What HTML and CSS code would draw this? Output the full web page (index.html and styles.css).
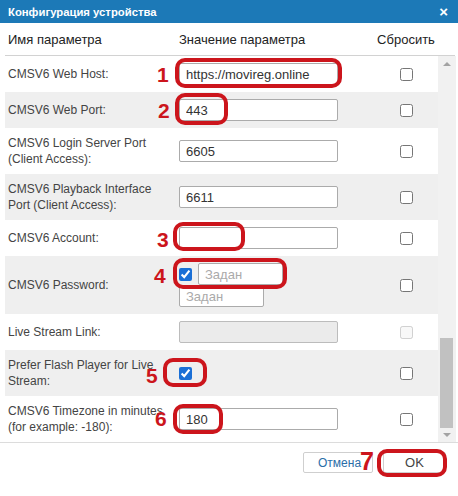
FILE: index.html
```html
<!DOCTYPE html>
<html lang="ru">
<head>
<meta charset="utf-8">
<title>Конфигурация устройства</title>
<link rel="stylesheet" href="styles.css">
</head>
<body>
<div class="dialog">
  <div class="titlebar">
    <span class="title">Конфигурация устройства</span>
    <span class="close">×</span>
  </div>
  <div class="thead">
    <div class="th th-name">Имя параметра</div>
    <div class="th">Значение параметра</div>
    <div class="th th-reset">Сбросить</div>
  </div>
  <div class="body">
    <div class="rows">
      <div class="row">
        <div class="name">CMSV6 Web Host:</div>
        <div class="value"><input class="field" type="text" value="https://movireg.online"></div>
        <div class="reset"><input type="checkbox" class="cb"></div>
      </div>
      <div class="row alt">
        <div class="name">CMSV6 Web Port:</div>
        <div class="value"><input class="field" type="text" value="443"></div>
        <div class="reset"><input type="checkbox" class="cb"></div>
      </div>
      <div class="row">
        <div class="name">CMSV6 Login Server Port (Client Access):</div>
        <div class="value"><input class="field" type="text" value="6605"></div>
        <div class="reset"><input type="checkbox" class="cb"></div>
      </div>
      <div class="row alt">
        <div class="name">CMSV6 Playback Interface Port (Client Access):</div>
        <div class="value"><input class="field" type="text" value="6611"></div>
        <div class="reset"><input type="checkbox" class="cb"></div>
      </div>
      <div class="row">
        <div class="name">CMSV6 Account:</div>
        <div class="value"><input class="field" type="text" value=""></div>
        <div class="reset"><input type="checkbox" class="cb"></div>
      </div>
      <div class="row alt">
        <div class="name">CMSV6 Password:</div>
        <div class="value pw">
          <div class="pw-line"><input type="checkbox" class="cb" checked><input class="field small gap" type="password" placeholder="Задан"></div>
          <div class="pw-line"><input class="field small" type="password" placeholder="Задан"></div>
        </div>
        <div class="reset"><input type="checkbox" class="cb"></div>
      </div>
      <div class="row">
        <div class="name">Live Stream Link:</div>
        <div class="value"><input class="field" type="text" value="" disabled></div>
        <div class="reset"><input type="checkbox" class="cb" disabled></div>
      </div>
      <div class="row alt">
        <div class="name">Prefer Flash Player for Live Stream:</div>
        <div class="value"><input type="checkbox" class="cb" checked></div>
        <div class="reset"><input type="checkbox" class="cb"></div>
      </div>
      <div class="row">
        <div class="name">CMSV6 Timezone in minutes (for example: -180):</div>
        <div class="value"><input class="field" type="text" value="180"></div>
        <div class="reset"><input type="checkbox" class="cb"></div>
      </div>
    </div>
    <div class="scrollbar">
      <div class="sb-btn sb-up"><span class="tri-up"></span></div>
      <div class="sb-space"></div>
      <div class="sb-thumb"></div>
      <div class="sb-btn sb-down"><span class="tri-down"></span></div>
    </div>
  </div>
  <div class="footer">
    <button class="btn btn-cancel" type="button">Отмена</button>
    <button class="btn btn-ok" type="button">OK</button>
  </div>

  <div class="mark box b1"></div><span class="mark num n1">1</span>
  <div class="mark box b2"></div><span class="mark num n2">2</span>
  <div class="mark box b3"></div><span class="mark num n3">3</span>
  <div class="mark box b4"></div><span class="mark num n4">4</span>
  <div class="mark box b5"></div><span class="mark num n5">5</span>
  <div class="mark box b6"></div><span class="mark num n6">6</span>
  <div class="mark box b7"></div><span class="mark num n7">7</span>
</div>
</body>
</html>
```

FILE: styles.css
```css
* { box-sizing: border-box; }
html, body { margin: 0; padding: 0; background: #fff; }
body { font-family: "Liberation Sans", Arial, sans-serif; color: #333; }

.dialog {
  position: relative;
  width: 458px;
  height: 496px;
  background: #fff;
  overflow: hidden;
}

.titlebar {
  height: 23px;
  background: #1c79b7;
  color: #fff;
  display: flex;
  align-items: center;
  justify-content: space-between;
  padding: 0 10px 0 8px;
}
.title { font-size: 11.3px; font-weight: bold; }
.close { font-size: 15px; line-height: 1; font-weight: bold; }

.thead {
  height: 33px;
  margin: 0 3px 0 5px;
  border-bottom: 1px solid #d2d2d2;
  display: grid;
  grid-template-columns: 174px 195px 64px;
  align-items: center;
  font-size: 13px;
  color: #222;
}
.th-name { padding-left: 3px; }
.th-reset { text-align: center; white-space: nowrap; }

.body {
  height: 386px;
  display: flex;
  padding-left: 5px;
}
.rows {
  width: 433px;
  overflow: hidden;
}
.row {
  display: grid;
  grid-template-columns: 174px 195px 64px;
  align-items: center;
  padding: 7px 0;
  background: #fff;
}
.row.alt { background: #efefef; }
.name {
  padding-left: 3px;
  padding-right: 9px;
  font-size: 12px;
  line-height: 16px;
  color: #444;
}
.value { display: flex; align-items: center; }
.reset { display: flex; justify-content: center; align-items: center; }

.field {
  width: 159px;
  height: 22px;
  border: 1px solid #ababab;
  border-radius: 2px;
  padding: 0 6px;
  font-family: "Liberation Sans", Arial, sans-serif;
  font-size: 13px;
  color: #333;
  background: #fff;
  outline: none;
}
.field:disabled { background: #ebebeb; border-color: #bcbcbc; }
.field::placeholder { color: #aaa; }
.field.small { width: 85px; }
.field.gap { margin-left: 6px; }

.pw { flex-direction: column; align-items: flex-start; }
.pw-line { display: flex; align-items: center; height: 22px; }

.cb {
  width: 13px;
  height: 13px;
  margin: 0;
  accent-color: #1a6fd6;
}

.scrollbar {
  width: 18px;
  background: #f1f1f1;
  display: flex;
  flex-direction: column;
}
.sb-btn { display: flex; justify-content: center; align-items: center; }
.sb-up { height: 16px; }
.sb-down { height: 14px; }
.sb-space { height: 266px; }
.sb-thumb {
  height: 90px;
  margin: 0 3px 0 2px;
  background: #c1c1c1;
}
.tri-up, .tri-down {
  width: 0; height: 0;
  border-left: 4px solid transparent;
  border-right: 4px solid transparent;
}
.tri-up { border-bottom: 4px solid #a3a3a3; }
.tri-down { border-top: 4px solid #a3a3a3; }

.footer {
  height: 54px;
  border-top: 1px solid #dcdcdc;
  display: flex;
  justify-content: flex-end;
  align-items: flex-start;
  gap: 10px;
  padding: 9px 12px 0 0;
}
.btn {
  height: 21px;
  background: #fff;
  border: 1px solid #cfcfcf;
  border-radius: 2px;
  font-family: "Liberation Sans", Arial, sans-serif;
  font-size: 12px;
  padding: 0 14px;
}
.btn-cancel { width: 70px; color: #2a6ea8; }
.btn-ok { width: 63px; color: #444; font-size: 13px; }

/* annotation overlays */
.mark { position: absolute; }
.box {
  border: 4px solid #cc151c;
  border-radius: 10px;
}
.num {
  font-family: "Liberation Sans", Arial, sans-serif;
  font-weight: bold;
  font-size: 21px;
  line-height: 21px;
  color: #cc151c;
}
.b1 { left: 175px; top: 58px; width: 167px; height: 30px; }
.b2 { left: 175px; top: 93px; width: 53px; height: 32px; }
.b3 { left: 173px; top: 222px; width: 72px; height: 29px; }
.b4 { left: 173px; top: 258px; width: 114px; height: 31px; }
.b5 { left: 163px; top: 358px; width: 44px; height: 29px; }
.b6 { left: 173px; top: 404px; width: 50px; height: 30px; }
.b7 { left: 377px; top: 449px; width: 70px; height: 28px; }
.n1 { left: 157px; top: 64px; }
.n2 { left: 158px; top: 100px; }
.n3 { left: 157px; top: 229px; }
.n4 { left: 154px; top: 265px; }
.n5 { left: 146px; top: 365px; }
.n6 { left: 155px; top: 408px; }
.n7 { left: 360px; top: 449px; font-size: 25px; line-height: 25px; }
```
